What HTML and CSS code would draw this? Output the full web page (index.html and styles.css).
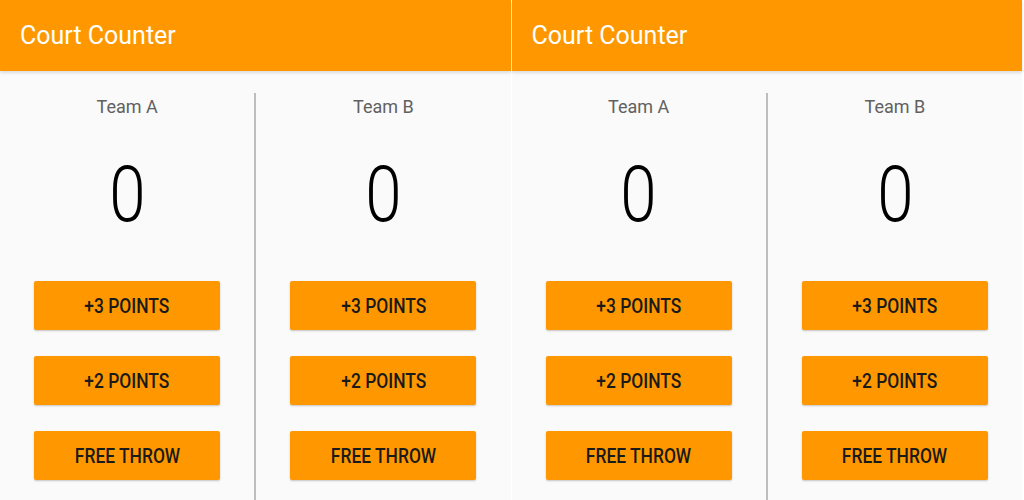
FILE: index.html
```html
<!DOCTYPE html>
<html>
<head>
<meta charset="utf-8">
<link rel="stylesheet" href="styles.css">
</head>
<body>
<div class="screens">
  <section class="app">
    <header class="bar">Court Counter</header>
    <div class="board">
      <div class="team">
        <div class="name">Team A</div>
        <div class="score"><span>0</span></div>
        <button class="btn"><span>+3 POINTS</span></button>
        <button class="btn"><span>+2 POINTS</span></button>
        <button class="btn"><span>FREE THROW</span></button>
      </div>
      <div class="divider"></div>
      <div class="team">
        <div class="name">Team B</div>
        <div class="score"><span>0</span></div>
        <button class="btn"><span>+3 POINTS</span></button>
        <button class="btn"><span>+2 POINTS</span></button>
        <button class="btn"><span>FREE THROW</span></button>
      </div>
    </div>
  </section>
  <section class="app">
    <header class="bar">Court Counter</header>
    <div class="board">
      <div class="team">
        <div class="name">Team A</div>
        <div class="score"><span>0</span></div>
        <button class="btn"><span>+3 POINTS</span></button>
        <button class="btn"><span>+2 POINTS</span></button>
        <button class="btn"><span>FREE THROW</span></button>
      </div>
      <div class="divider"></div>
      <div class="team">
        <div class="name">Team B</div>
        <div class="score"><span>0</span></div>
        <button class="btn"><span>+3 POINTS</span></button>
        <button class="btn"><span>+2 POINTS</span></button>
        <button class="btn"><span>FREE THROW</span></button>
      </div>
    </div>
  </section>
</div>
</body>
</html>
```
FILE: styles.css
```css
* { box-sizing: border-box; }
html, body {
  margin: 0;
  padding: 0;
  background: #ffffff;
  font-family: Roboto, "Liberation Sans", sans-serif;
  overflow: hidden;
}
.screens {
  display: flex;
  gap: 1px;
  width: 1024px;
  height: 500px;
  padding-right: 2px;
}
.app {
  flex: 1 1 0;
  display: flex;
  flex-direction: column;
  background: #fafafa;
  height: 500px;
}
.bar {
  height: 71px;
  flex: none;
  background: #ff9800;
  color: #ffffff;
  font-size: 25px;
  line-height: 71px;
  padding-left: 20px;
  box-shadow: 0 2px 3px rgba(0,0,0,0.12);
  position: relative;
  z-index: 1;
}
.board {
  flex: 1;
  display: flex;
  margin-top: 22px;
}
.team {
  flex: 1 1 0;
  display: flex;
  flex-direction: column;
  align-items: center;
}
.divider {
  width: 2px;
  background: #bdbdbd;
  flex: none;
}
.name {
  font-size: 18px;
  line-height: 24px;
  margin-top: 2px;
  color: #616161;
}
.score {
  font-size: 77px;
  font-weight: 300;
  line-height: 90px;
  height: 90px;
  margin-top: 31px;
  color: #000;
}
.score span {
  display: inline-block;
  transform: scaleX(0.85);
}
.btn {
  width: 186px;
  height: 49px;
  border: none;
  border-radius: 2px;
  background: #ff9800;
  color: #1a1a1a;
  font-family: Roboto, "Liberation Sans", sans-serif;
  font-size: 20px;
  font-weight: 500;
  padding: 0;
  box-shadow: 0 1px 2px rgba(0,0,0,0.22);
  margin-top: 26px;
  white-space: nowrap;
}
.btn span {
  display: inline-block;
  transform: scaleX(0.87);
}
.score + .btn { margin-top: 41px; }
```
